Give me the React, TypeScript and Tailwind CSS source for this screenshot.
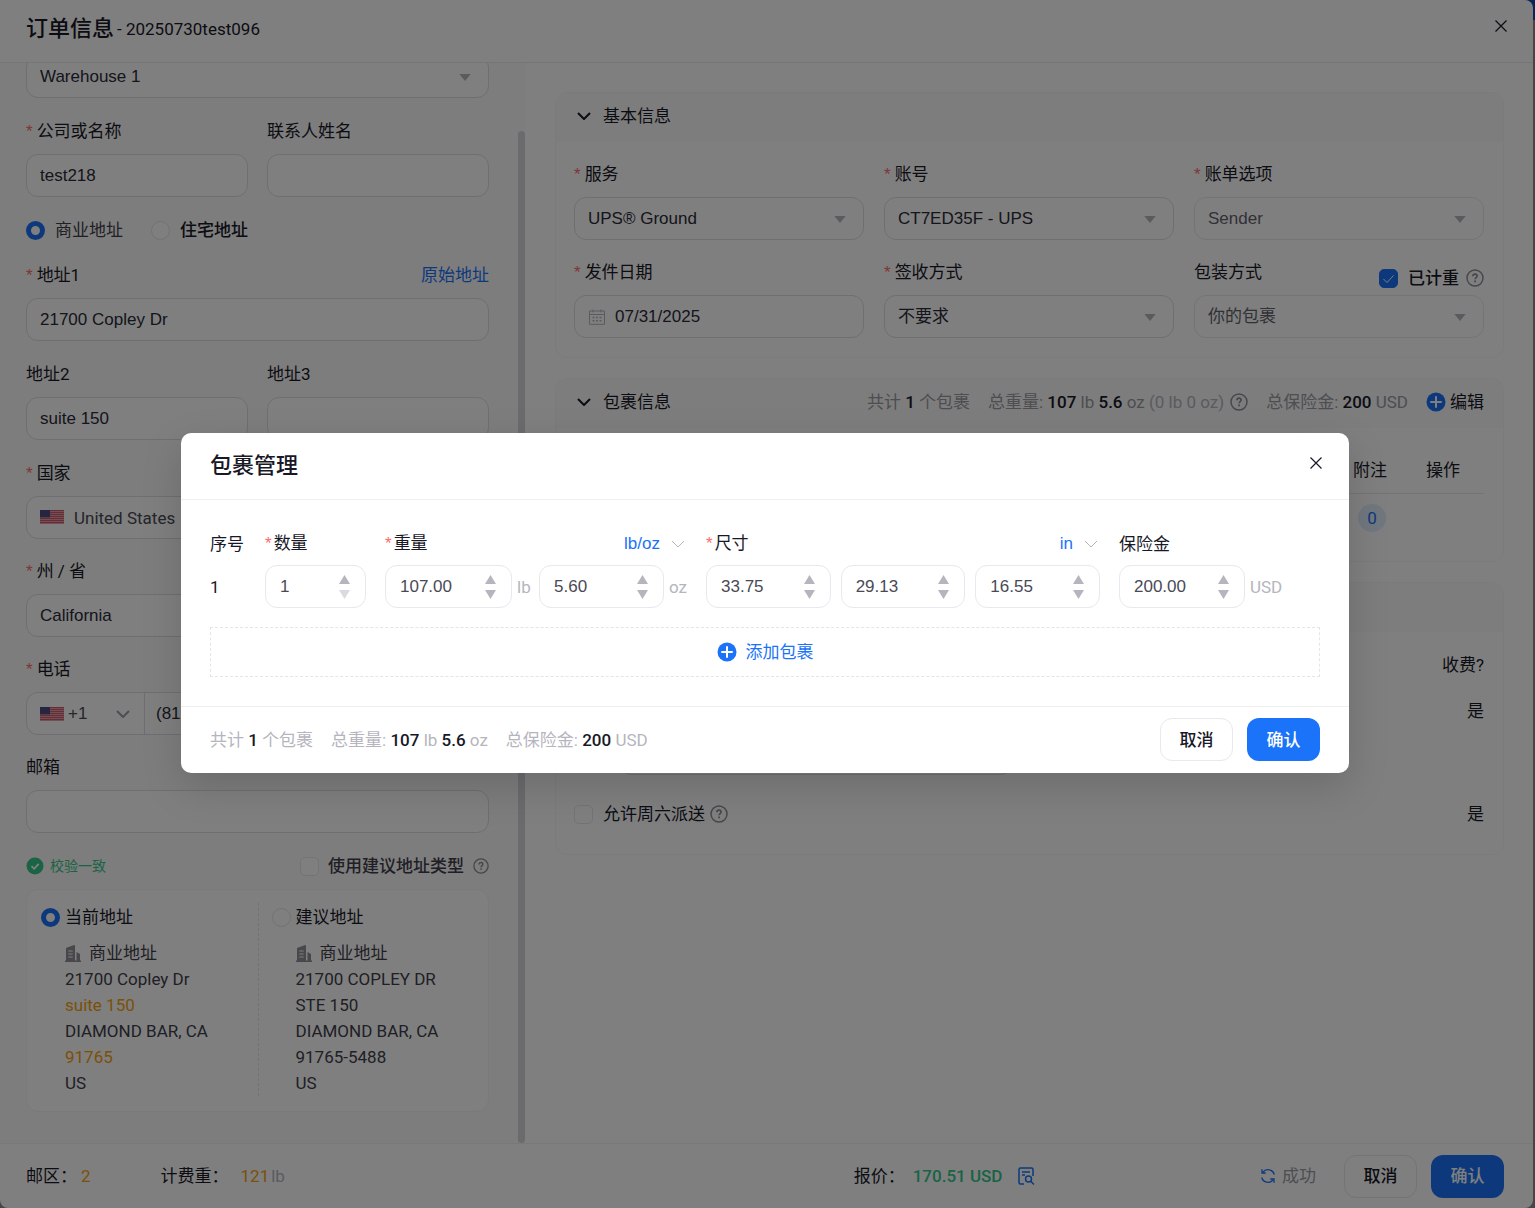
import { useState } from 'react'
import type { ReactNode } from 'react'
import { clsx } from 'clsx'

const inputFont = "[font-family:'Liberation_Sans','Noto_Sans_CJK_SC',sans-serif]"

/* ---------- icons ---------- */

function CaretDown({ className }: { className?: string }) {
  return (
    <svg viewBox="0 0 12 7" className={clsx('w-3 h-[7px] fill-[#b5b5be]', className)} aria-hidden="true">
      <path d="M0.3 0h11.4L6 7z" />
    </svg>
  )
}

function Chevron({ className }: { className?: string }) {
  return (
    <svg viewBox="0 0 14 8" className={clsx('w-3.5 h-2 fill-none', className)} aria-hidden="true">
      <path d="M1 1l6 6 6-6" />
    </svg>
  )
}

function CloseIcon() {
  return (
    <svg viewBox="0 0 12 12" className="w-3 h-3 fill-none stroke-[#181827]" strokeWidth="1.2" aria-hidden="true">
      <path d="M0.5 0.5l11 11M11.5 0.5l-11 11" />
    </svg>
  )
}

function HelpIcon({ className }: { className?: string }) {
  return (
    <svg viewBox="0 0 18 18" className={clsx('shrink-0 fill-none stroke-[#8f8f98]', className)} aria-hidden="true">
      <circle cx="9" cy="9" r="8" strokeWidth="1.5" />
      <path d="M6.9 7.2c0-1.3 0.9-2.1 2.1-2.1s2.1 0.8 2.1 1.9c0 1.5-2 1.6-2 3.3" strokeWidth="1.7" />
      <path d="M9.1 11.5v1.7" strokeWidth="1.8" />
    </svg>
  )
}

function PlusCircle() {
  return (
    <svg viewBox="0 0 20 20" className="w-5 h-5 shrink-0" aria-hidden="true">
      <circle cx="10" cy="10" r="9.5" className="fill-[#1a73f8]" />
      <path d="M10 5v10M5 10h10" stroke="#fff" strokeWidth="2" strokeLinecap="round" />
    </svg>
  )
}

function Flag() {
  return (
    <svg viewBox="0 0 24 14" className="w-6 h-3.5 shrink-0" aria-hidden="true">
      <rect width="24" height="14" fill="#e9b3bb" />
      {[0, 2, 4, 6, 8, 10, 12].map((y) => (
        <rect key={y} y={y} width="24" height="1.2" fill="#cf5a6d" />
      ))}
      <rect width="10" height="7.4" fill="#4d4c82" />
    </svg>
  )
}

function BuildingIcon() {
  return (
    <svg viewBox="0 0 16 17" className="w-4 h-[17px] shrink-0" aria-hidden="true">
      <path d="M0 15.5h1V3l8-3 1 0.600V15.500h1.500V7l3.500 2v6.500h1V17H0z" fill="#8f8f98" />
      <path d="M3.3 6h4.4M3.3 9h4.4M3.3 12h4.4" stroke="#fff" strokeWidth="1.2" />
    </svg>
  )
}

function CalendarIcon() {
  return (
    <svg viewBox="0 0 16 16" className="w-4 h-4 fill-none stroke-[#b5b5be]" aria-hidden="true">
      <path d="M0.5 2h15v13.3h-15zM0.5 5.5h15M4 0.5v3M12 0.5v3" />
      <path d="M3.5 8.5h2M7 8.5h2M10.5 8.5h2M3.5 11.7h2M7 11.7h2M10.5 11.7h2" strokeWidth="1.4" />
    </svg>
  )
}

function QuoteIcon() {
  return (
    <svg viewBox="0 0 17 18" className="w-[17px] h-[18px] fill-none stroke-[#1a73f8]" strokeWidth="1.5" aria-hidden="true">
      <path d="M6 17H2.5A1.5 1.5 0 0 1 1 15.5V2.5A1.5 1.5 0 0 1 2.5 1h11A1.5 1.5 0 0 1 15 2.5V9" />
      <path d="M4 5h8M4 8h3" />
      <circle cx="10.5" cy="12" r="3" />
      <path d="M12.7 14.2L16 17.5" />
    </svg>
  )
}

function SyncIcon() {
  return (
    <svg viewBox="0 0 16 16" className="w-4 h-4 fill-none stroke-[#1a73f8]" strokeWidth="1.3" aria-hidden="true">
      <path d="M14.3 6.5A6.5 6.5 0 0 0 2.8 4.3M1.7 9.5a6.5 6.5 0 0 0 11.5 2.2" />
      <path d="M2 1.3v3.7h3.7M14 14.7V11h-3.7" />
    </svg>
  )
}

/* ---------- form parts ---------- */

function Star({ tight }: { tight?: boolean }) {
  return <span className={clsx('text-[#ff6b6b]', inputFont, tight ? 'mr-0.5' : 'mr-1')}>*</span>
}

interface FieldProps {
  id: string
  label: string
  required?: boolean
  extra?: ReactNode
  children: ReactNode
}

function Field({ id, label, required, extra, children }: FieldProps) {
  return (
    <div className="min-w-0">
      <div className="h-6 mb-[11px] flex items-center justify-between">
        <label htmlFor={id} className="whitespace-nowrap">
          {required && <Star />}
          {label}
        </label>
        {extra}
      </div>
      {children}
    </div>
  )
}

const box = 'block w-full h-[43px] rounded-xl border bg-white outline-none appearance-none'

function TextInput({ id, value = '' }: { id: string; value?: string }) {
  return (
    <input
      id={id}
      defaultValue={value}
      className={clsx(box, inputFont, 'px-[13px] border-[#dedee6] text-[#2b2b38]')}
    />
  )
}

interface PickerProps {
  id: string
  value: string
  muted?: boolean
}

function Picker({ id, value, muted }: PickerProps) {
  return (
    <div className="relative">
      <select
        id={id}
        className={clsx(
          box,
          inputFont,
          'px-[13px]',
          muted ? 'border-[#e8e8ee] text-[#63636e]' : 'border-[#dedee4] text-[#2b2b38]',
        )}
      >
        <option>{value}</option>
      </select>
      <CaretDown className="absolute right-[18px] top-[19px] pointer-events-none" />
    </div>
  )
}

function Radio({ id, name, checked }: { id: string; name: string; checked?: boolean }) {
  return (
    <input
      id={id}
      type="radio"
      name={name}
      defaultChecked={checked}
      className="appearance-none w-[19px] h-[19px] shrink-0 rounded-full bg-white border border-[#e4e4ea] checked:border-5 checked:border-[#1a73f8]"
    />
  )
}

function Checkbox({ id, checked }: { id: string; checked?: boolean }) {
  return (
    <span className="relative w-[19px] h-[19px] shrink-0">
      <input
        id={id}
        type="checkbox"
        defaultChecked={checked}
        className="block appearance-none w-full h-full rounded-[5px] bg-white border border-[#e8e8ee] checked:border-[#1a73f8] checked:bg-[#1a73f8]"
      />
      {checked && (
        <svg viewBox="0 0 19 19" className="absolute inset-0 fill-none stroke-white pointer-events-none" aria-hidden="true">
          <path d="M4.5 10l3.5 3.5 6.5-7" />
        </svg>
      )}
    </span>
  )
}

function Buttons() {
  return (
    <div className="flex gap-3.5 font-medium">
      <button className="w-[73px] h-[43px] rounded-xl border border-[#e8e8ee] bg-white">取消</button>
      <button className="w-[73px] h-[43px] rounded-xl bg-[#1a73f8] text-white">确认</button>
    </div>
  )
}

/* ---------- left column ---------- */

interface AddressProps {
  id: string
  title: string
  lines: string[]
  changed?: string[]
  checked?: boolean
}

function AddressChoice({ id, title, lines, changed = [], checked }: AddressProps) {
  return (
    <div className="px-[13px] border-l border-dashed border-[#e4e4ea] first:border-transparent">
      <div className="h-7 flex items-center gap-[5px]">
        <Radio id={id} name="suggested" checked={checked} />
        <label htmlFor={id}>{title}</label>
      </div>
      <div className="mt-[9px] pl-6 leading-[26px] text-[#3f3f4b]">
        <p className="flex items-center gap-2">
          <BuildingIcon />
          商业地址
        </p>
        {lines.map((line) => (
          <p key={line} className={clsx(changed.includes(line) && 'text-[#f5a210]')}>
            {line}
          </p>
        ))}
      </div>
    </div>
  )
}

function AddressPanel() {
  return (
    <section className="w-[525px] shrink-0 flex bg-[#fafafa] overflow-hidden">
      {/* anchored to the bottom, the column is scrolled all the way down */}
      <div className="flex-1 min-w-0 flex flex-col justify-end pl-[26px] pr-[29px] pb-[31px]">
        <div className="flex flex-col gap-[21px]">
          <Picker id="warehouse" value="Warehouse 1" />
          <div className="grid grid-cols-2 gap-[19px]">
            <Field id="company" label="公司或名称" required>
              <TextInput id="company" value="test218" />
            </Field>
            <Field id="contact" label="联系人姓名">
              <TextInput id="contact" />
            </Field>
          </div>
        </div>

        <div className="my-[21px] h-[25px] flex items-center gap-7">
          <div className="flex items-center gap-2.5 text-[#3f3f4b]">
            <Radio id="commercial" name="kind" checked />
            <label htmlFor="commercial">商业地址</label>
          </div>
          <div className="flex items-center gap-2.5 font-medium">
            <Radio id="residential" name="kind" />
            <label htmlFor="residential">住宅地址</label>
          </div>
        </div>

        <div className="flex flex-col gap-[21px]">
          <Field
            id="address1"
            label="地址1"
            required
            extra={<a href="#original" className="text-[#1a73f8]">原始地址</a>}
          >
            <TextInput id="address1" value="21700 Copley Dr" />
          </Field>
          <div className="grid grid-cols-2 gap-[19px]">
            <Field id="address2" label="地址2">
              <TextInput id="address2" value="suite 150" />
            </Field>
            <Field id="address3" label="地址3">
              <TextInput id="address3" />
            </Field>
          </div>
        </div>

        <div className="mt-[21px] flex flex-col gap-5">
          <Field id="country" label="国家" required>
            <div className="relative">
              <select id="country" className={clsx(box, 'pl-[47px] border-[#dedee6] text-[#4a4a55]')}>
                <option>United States</option>
              </select>
              <span className="absolute left-[14px] top-[14px] pointer-events-none">
                <Flag />
              </span>
            </div>
          </Field>
          <Field id="state" label="州 / 省" required>
            <Picker id="state" value="California" />
          </Field>
          <Field id="phone" label="电话" required>
            <div className={clsx('border-[#dedee6] overflow-hidden', box)}>
              <div className="flex h-full">
                <button
                  aria-label="+1"
                  className={clsx('w-[118px] h-full pl-[13px] pr-[14px] flex items-center border-r border-[#dedee6] text-[#4a4a55]', inputFont)}
                >
                  <Flag />
                  <span className="ml-1">+1</span>
                  <Chevron className="ml-auto stroke-[#9a9aa4] stroke-2" />
                </button>
                <input
                  id="phone"
                  defaultValue="(812)"
                  className={clsx('flex-1 min-w-0 px-[11px] outline-none text-[#2b2b38]', inputFont)}
                />
              </div>
            </div>
          </Field>
          <Field id="email" label="邮箱">
            <TextInput id="email" />
          </Field>
        </div>

        <div className="mt-[21px] mb-[11px] h-6 flex items-center justify-between">
          <p className="flex items-center gap-1.5 text-sm text-[#35c88a]">
            <svg viewBox="0 0 18 18" className="w-[18px] h-[18px]" aria-hidden="true">
              <circle cx="9" cy="9" r="8.5" fill="#35c88a" />
              <path d="M5.5 9.2l2.6 2.6 4.6-5" fill="none" stroke="#fff" strokeWidth="1.8" />
            </svg>
            校验一致
          </p>
          <div className="flex items-center gap-[9px] font-medium text-[#3f3f4b]">
            <Checkbox id="useType" />
            <label htmlFor="useType">使用建议地址类型</label>
            <HelpIcon className="w-4 h-4" />
          </div>
        </div>

        <div className="pt-[13px] pb-[15px] grid grid-cols-2 rounded-xl border border-[#f4f4f6] bg-white">
          <AddressChoice
            id="current"
            title="当前地址"
            checked
            lines={['21700 Copley Dr', 'suite 150', 'DIAMOND BAR, CA', '91765', 'US']}
            changed={['suite 150', '91765']}
          />
          <AddressChoice
            id="suggest"
            title="建议地址"
            lines={['21700 COPLEY DR', 'STE 150', 'DIAMOND BAR, CA', '91765-5488', 'US']}
          />
        </div>
      </div>
      <div className="mt-[68px] w-[7px] shrink-0 rounded-full bg-[#d6d7da]" />
    </section>
  )
}

/* ---------- right column ---------- */

function Card({ title, extra, children }: { title?: string; extra?: ReactNode; children: ReactNode }) {
  return (
    <section className="rounded-xl border border-[#f7f7f9] bg-white overflow-hidden">
      <header className="h-[49px] px-[19px] pb-1 flex items-center justify-between bg-[#fafafa]">
        <h2 className="flex items-center">
          {title && <Chevron className="ml-0.5 mr-3 stroke-[#181827] stroke-2" />}
          {title}
        </h2>
        {extra}
      </header>
      <div className="pl-[18px] pr-[19px]">{children}</div>
    </section>
  )
}

function Strong({ children }: { children: ReactNode }) {
  return <b className="font-medium text-[#181827]">{children}</b>
}

function OrderPanel() {
  return (
    <div className="flex-1 min-w-0 pl-[30px] pr-[29px] pt-[29px] flex flex-col gap-5">
      <Card title="基本信息">
        <div className="pt-5 pb-[19px] grid grid-cols-3 gap-5">
          <Field id="service" label="服务" required>
            <Picker id="service" value="UPS® Ground" />
          </Field>
          <Field id="account" label="账号" required>
            <Picker id="account" value="CT7ED35F - UPS" />
          </Field>
          <Field id="billing" label="账单选项" required>
            <Picker id="billing" value="Sender" muted />
          </Field>
          <Field id="shipDate" label="发件日期" required>
            <div className={clsx(box, 'border-[#dedee6]')}>
              <div className="h-full px-[14px] flex items-center gap-2.5">
                <CalendarIcon />
                <input
                  id="shipDate"
                  defaultValue="07/31/2025"
                  className={clsx('flex-1 min-w-0 outline-none text-[#2b2b38]', inputFont)}
                />
              </div>
            </div>
          </Field>
          <Field id="signature" label="签收方式" required>
            <Picker id="signature" value="不要求" />
          </Field>
          <Field
            id="packaging"
            label="包装方式"
            extra={
              <div className="mt-3 flex items-center font-medium">
                <Checkbox id="weighed" checked />
                <label htmlFor="weighed" className="ml-2.5 mr-[7px]">已计重</label>
                <HelpIcon className="w-[18px] h-[18px]" />
              </div>
            }
          >
            <Picker id="packaging" value="你的包裹" muted />
          </Field>
        </div>
      </Card>

      <Card
        title="包裹信息"
        extra={
          <div className="flex items-center gap-[18px] text-[#9a9aa4]">
            <span>共计 <Strong>1</Strong> 个包裹</span>
            <span className="flex items-center gap-1.5">
              <span>
                总重量: <Strong>107</Strong> lb <Strong>5.6</Strong> oz{' '}
                <span className="text-[#b5b5be]">(0 lb 0 oz)</span>
              </span>
              <HelpIcon className="w-[18px] h-[18px]" />
            </span>
            <span>总保险金: <Strong>200</Strong> USD</span>
            <button className="flex items-center gap-1 text-[#181827]">
              <PlusCircle />
              编辑
            </button>
          </div>
        }
      >
        <table className="my-[19px] w-full text-left">
          <thead>
            <tr className="h-[46px] border-b border-[#e8e8ee]">
              <td />
              <th className="w-[73px] font-normal">附注</th>
              <th className="w-[58px] font-normal">操作</th>
            </tr>
          </thead>
          <tbody>
            <tr className="h-[49px]">
              <td />
              <td>
                <span className="ml-[5px] w-7 h-7 flex items-center justify-center rounded-full bg-[#e3eefe] text-[#1a73f8]">0</span>
              </td>
              <td />
            </tr>
          </tbody>
        </table>
      </Card>

      <Card>
        <table className="mt-2.5 mb-7 w-full">
          <thead>
            <tr className="h-[46px]">
              <td />
              <th className="text-right font-normal">收费?</th>
            </tr>
          </thead>
          <tbody>
            <tr>
              <td className="h-[87px] pl-[45px] align-bottom">
                <input aria-label="收费" className={clsx(box, 'max-w-[394px] border-[#dedee6]')} />
              </td>
              <td className="pt-[11px] text-right align-top">是</td>
            </tr>
            <tr className="h-[51px]">
              <td className="pt-[27px]">
                <div className="flex items-center">
                  <Checkbox id="saturday" />
                  <label htmlFor="saturday" className="ml-2.5 mr-[5px]">允许周六派送</label>
                  <HelpIcon className="w-[18px] h-[18px]" />
                </div>
              </td>
              <td className="pt-[27px] text-right">是</td>
            </tr>
          </tbody>
        </table>
      </Card>
    </div>
  )
}

/* ---------- package dialog ---------- */

interface NumberBoxProps {
  label: string
  value: string
  className?: string
  min?: boolean
}

function NumberBox({ label, value, className, min }: NumberBoxProps) {
  const [amount, setAmount] = useState(value)
  const digits = value.includes('.') ? 2 : 0
  const step = (by: number) => setAmount((Number(amount) + by).toFixed(digits))

  return (
    <div className={clsx('h-[43px] flex items-center rounded-xl border border-[#e8e8ee] pl-[14px] pr-[15px]', className)}>
      <input
        aria-label={label}
        value={amount}
        onChange={(e) => setAmount(e.target.value)}
        className={clsx('flex-1 w-0 min-w-0 outline-none text-[#4a4a55]', inputFont)}
      />
      <div className="flex flex-col gap-1.5">
        <button aria-label={`${label} +`} onClick={() => step(1)}>
          <svg viewBox="0 0 11 9" className="block w-[11px] h-[9px] fill-[#b5b5be]" aria-hidden="true">
            <path d="M5.5 0L11 9H0z" />
          </svg>
        </button>
        <button aria-label={`${label} -`} disabled={min} onClick={() => step(-1)}>
          <svg viewBox="0 0 11 9" className={clsx('block w-[11px] h-[9px]', min ? 'fill-[#dadae0]' : 'fill-[#b5b5be]')} aria-hidden="true">
            <path d="M5.5 9L11 0H0z" />
          </svg>
        </button>
      </div>
    </div>
  )
}

function UnitSelect({ label, value }: { label: string; value: string }) {
  return (
    <span className="relative">
      <select
        aria-label={label}
        className={clsx('block appearance-none pr-[27px] outline-none text-[#1a73f8] [field-sizing:content]', inputFont)}
      >
        <option>{value}</option>
      </select>
      <Chevron className="absolute right-0.5 top-2 stroke-[#b5b5be] pointer-events-none" />
    </span>
  )
}

function PackageDialog() {
  return (
    <div role="dialog" aria-label="包裹管理" className="w-full max-w-[1168px] rounded-[10px] bg-white shadow-[0_14px_40px_rgba(0,0,0,0.15)]">
      <header className="h-[67px] pl-[29px] pr-[27px] flex items-center justify-between border-b border-[#efeff2]">
        <h2 className="text-[22px] font-medium">包裹管理</h2>
        <button aria-label="关闭" className="mb-1.5">
          <CloseIcon />
        </button>
      </header>

      <div className="px-[29px] pt-[31px] pb-[29px]">
        <div className="grid grid-cols-[36px_101px_302px_394px_1fr] gap-x-[19px] gap-y-[9px] items-center">
          <span>序号</span>
          <span><Star tight />数量</span>
          <span className="flex items-center justify-between">
            <span><Star tight />重量</span>
            <UnitSelect label="重量" value="lb/oz" />
          </span>
          <span className="flex items-center justify-between">
            <span><Star tight />尺寸</span>
            <UnitSelect label="尺寸" value="in" />
          </span>
          <span>保险金</span>

          <span>1</span>
          <NumberBox label="数量" value="1" min />
          <div className="flex items-center justify-between text-[#b5b5be]">
            <span className="flex items-center gap-[5px]">
              <NumberBox label="重量 lb" value="107.00" className="w-[127px]" />
              lb
            </span>
            <span className="flex items-center gap-[5px]">
              <NumberBox label="重量 oz" value="5.60" className="w-[125px]" />
              oz
            </span>
          </div>
          <div className="grid grid-cols-3 gap-2.5">
            <NumberBox label="尺寸 1" value="33.75" />
            <NumberBox label="尺寸 2" value="29.13" />
            <NumberBox label="尺寸 3" value="16.55" />
          </div>
          <div className="flex items-center gap-[5px] text-[#b5b5be]">
            <NumberBox label="保险金" value="200.00" className="w-[126px]" />
            USD
          </div>
        </div>

        <button className="mt-[19px] w-full h-[50px] flex items-center justify-center gap-[9px] border border-dashed border-[#e4e4ea] text-[#1a73f8]">
          <PlusCircle />
          添加包裹
        </button>
      </div>

      <footer className="h-[67px] px-[29px] pb-px flex items-center justify-between border-t border-[#efeff2]">
        <div className="flex gap-[18px] text-[#b5b5be]">
          <span>共计 <Strong>1</Strong> 个包裹</span>
          <span>总重量: <Strong>107</Strong> lb <Strong>5.6</Strong> oz</span>
          <span>总保险金: <Strong>200</Strong> USD</span>
        </div>
        <Buttons />
      </footer>
    </div>
  )
}

export default function App() {
  return (
    <div className="relative h-screen overflow-hidden pr-0.5 bg-[#8c8c8c] text-[17px] leading-6 text-[#181827] [font-family:Roboto,'Noto_Sans_CJK_SC',sans-serif]">
      <div className="absolute top-0 inset-x-0 h-5 bg-[#0c4fa8]" />

      <main className="relative h-full flex flex-col rounded-lg rounded-tl-none bg-white overflow-hidden">
        <header className="h-[63px] shrink-0 px-[26px] flex items-center justify-between border-b border-[#ececf0]">
          <h1 className="mb-1 flex items-center gap-[3px]">
            <span className="text-[22px] font-medium">订单信息</span>
            <span>- 20250730test096</span>
          </h1>
          <button aria-label="关闭" className="mb-2.5">
            <CloseIcon />
          </button>
        </header>

        <div className="flex-1 min-h-0 flex">
          <AddressPanel />
          <OrderPanel />
        </div>

        <footer className="h-[65px] shrink-0 pl-[26px] pr-[29px] flex items-center border-t border-[#f2f2f4]">
          <div className="w-[56%] flex gap-[70px]">
            <span className="flex gap-1">
              邮区：<span className="text-[#f5a210]">2</span>
            </span>
            <span className="flex">
              计费重：
              <span className="ml-3 mr-0.5 text-[#f5a210]">121</span>
              <span className="text-[#b5b5be]">lb</span>
            </span>
          </div>
          <div className="flex items-center">
            报价：
            <span className="ml-2 mr-4 font-medium text-[#35c88a]">170.51 USD</span>
            <button aria-label="报价">
              <QuoteIcon />
            </button>
          </div>
          <div className="ml-auto flex items-center">
            <SyncIcon />
            <span className="ml-1.5 mr-7 text-[#9a9aa4]">成功</span>
            <Buttons />
          </div>
        </footer>
      </main>

      <div className="absolute inset-0 flex items-center justify-center pr-[5px] pb-0.5 bg-black/50">
        <PackageDialog />
      </div>
    </div>
  )
}
